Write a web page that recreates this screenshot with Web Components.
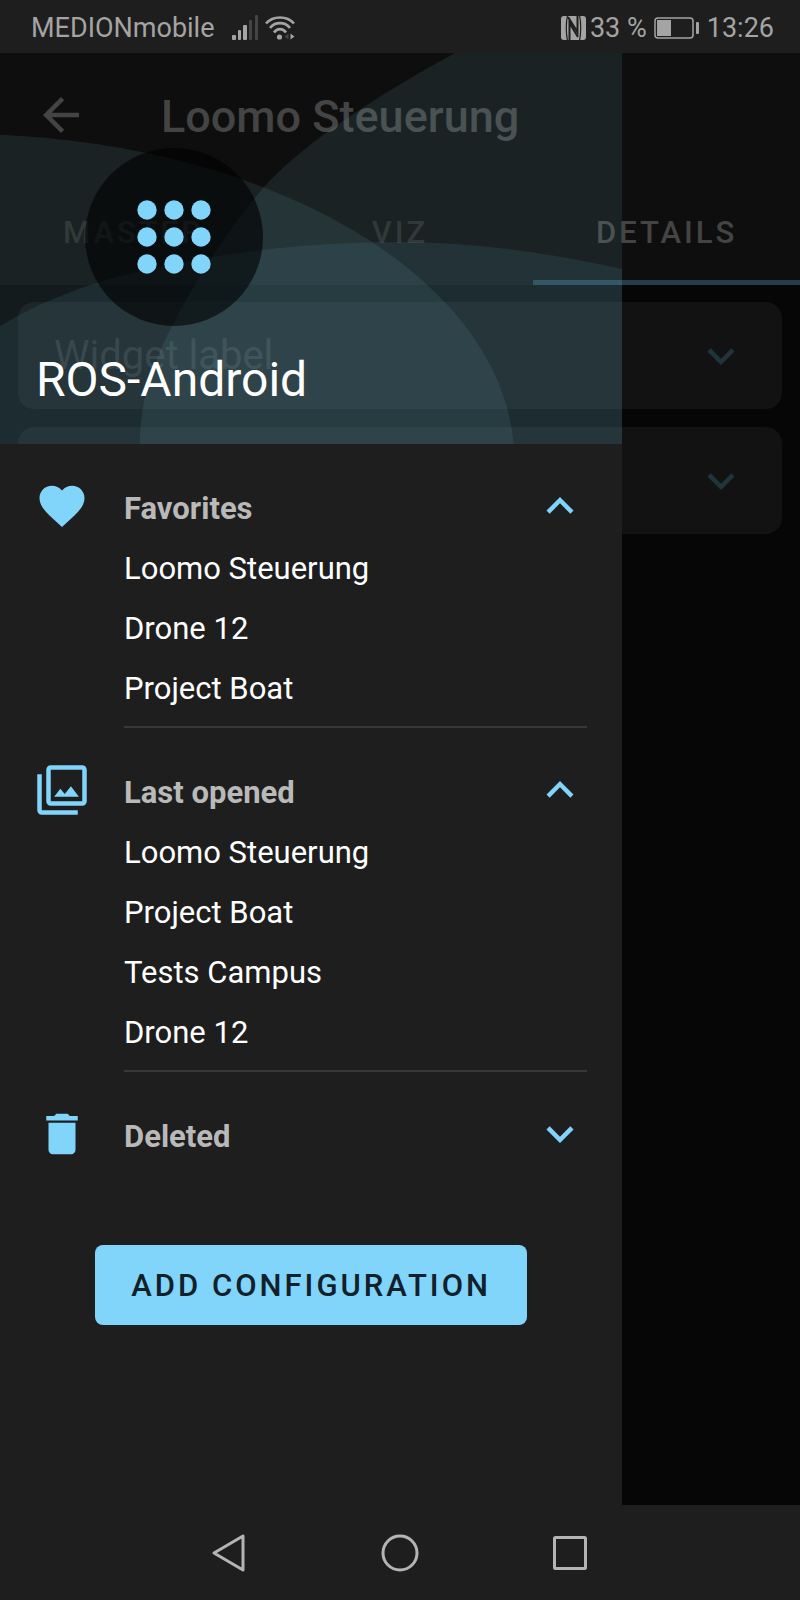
<!DOCTYPE html>
<html lang="en">
<head>
<meta charset="utf-8">
<meta name="viewport" content="width=device-width, initial-scale=1">
<title>ROS-Android</title>
<style>
  html, body { margin: 0; background: #1e1e1e; }
  body { font-family: Roboto, "Liberation Sans", sans-serif; }
</style>
</head>
<body>
<ros-app></ros-app>

<script>
const reset = `
  * { box-sizing: border-box; }
  button { font: inherit; color: inherit; background: none; border: 0; padding: 0; margin: 0; cursor: pointer; }
  svg { display: block; }
`;

function define(name, html, setup) {
  const template = document.createElement('template');
  template.innerHTML = html;
  customElements.define(name, class extends HTMLElement {
    constructor() {
      super();
      this.attachShadow({ mode: 'open' }).append(template.content.cloneNode(true));
    }
    connectedCallback() { if (setup) setup(this, this.shadowRoot); }
  });
}

const icons = {
  heart: 'M12 21.35l-1.45-1.32C5.4 15.36 2 12.28 2 8.5 2 5.42 4.42 3 7.5 3c1.74 0 3.41.81 4.5 2.09C13.09 3.81 14.76 3 16.5 3 19.58 3 22 5.42 22 8.5c0 3.78-3.4 6.86-8.55 11.54L12 21.35z',
  library: 'M15.96 10.29l-2.75 3.54-1.96-2.36L8.5 15h11l-3.54-4.71zM3 5H1v16c0 1.1.9 2 2 2h16v-2H3V5zm18-4H7c-1.1 0-2 .9-2 2v14c0 1.1.9 2 2 2h14c1.1 0 2-.9 2-2V3c0-1.1-.9-2-2-2zm0 16H7V3h14v14z',
  trash: 'M6 19c0 1.1.9 2 2 2h8c1.1 0 2-.9 2-2V7H6v12zM19 4h-3.5l-1-1h-5l-1 1H5v2h14V4z',
  up: 'M12 8l-6 6 1.41 1.41L12 10.83l4.59 4.58L18 14z',
  down: 'M16.59 8.59L12 13.17 7.41 8.59 6 10l6 6 6-6z',
  back: 'M20 11H7.83l5.59-5.59L12 4l-8 8 8 8 1.41-1.41L7.83 13H20v-2z'
};

define('ui-icon', `
  <style>${reset}
    :host { display: block; width: 54px; height: 54px; flex: none; }
    svg { width: 100%; height: 100%; fill: currentColor; }
  </style>
  <svg viewBox="0 0 24 24" aria-hidden="true"><path/></svg>`,
  (host, root) => root.querySelector('path').setAttribute('d', icons[host.getAttribute('name')]));

define('status-bar', `
  <style>${reset}
    :host { display: flex; align-items: center; height: 53px; padding: 2px 26px 0 31px; background: #1e1e1e; color: #a4a4a4; font-size: 27px; line-height: 30px; }
    .signal { margin-left: 16px; }
    .wifi { margin-left: 6px; }
    .nfc { margin-left: auto; }
    .level { margin-left: 4px; }
    .battery { margin: 0 7px; }
  </style>
  <span>MEDIONmobile</span>
  <svg class="signal" width="28" height="26" viewBox="0 0 28 26" fill="currentColor" aria-hidden="true">
    <rect x="1" y="20" width="4" height="5" rx="1"/><rect x="7" y="15" width="3" height="10" rx="1"/>
    <rect x="12" y="10" width="4" height="15" rx="1"/>
    <g fill="#444"><rect x="18" y="5" width="3" height="20" rx="1"/><rect x="24" y="0" width="3" height="25" rx="1"/></g>
  </svg>
  <svg class="wifi" width="30" height="26" viewBox="0 0 30 26" fill="none" stroke="currentColor" stroke-width="2.6" aria-hidden="true">
    <path d="M1 8.500C8 .5 22 .5 29 8.500M5 13C10 6.500 20 6.500 25 13M9 17.500C12 13 18 13 21 17.500"/>
    <circle cx="14.500" cy="22" r="2.600" fill="currentColor" stroke="none"/>
    <path d="M25.500 18.500v6l4-3z" fill="currentColor" stroke="none"/><path d="M23.500 18.500v6l-4-3z" fill="#444" stroke="none"/>
  </svg>
  <svg class="nfc" width="25" height="26" viewBox="0 0 25 26" aria-hidden="true">
    <rect y="1" width="25" height="24" rx="3" fill="currentColor"/>
    <path d="M6.500 0C5 8 5 18 6.500 26M18.500 0C20 8 20 18 18.500 26" fill="none" stroke="#1e1e1e" stroke-width="1.200"/>
    <path d="M8.500 25V8L17 22M16.500 1V17L7 2" fill="none" stroke="#1e1e1e" stroke-width="2"/>
  </svg>
  <span class="level">33 %</span>
  <svg class="battery" width="46" height="22" viewBox="0 0 46 22" aria-hidden="true">
    <rect x="1" y="1" width="38" height="20" rx="3" fill="none" stroke="currentColor" stroke-width="1.500"/>
    <rect x="3" y="3" width="14" height="16" fill="currentColor"/><rect x="42" y="5" width="3" height="12" rx="1" fill="currentColor"/>
  </svg>
  <time>13:26</time>`);

define('app-bar', `
  <style>${reset}
    :host { display: block; background: #0e0e0e; color: #444; }
    header { display: flex; align-items: flex-start; gap: 73px; height: 125px; padding: 35px 34px 0; }
    h1 { margin: 0; font-size: 45px; font-weight: 500; line-height: 58px; }
    nav { display: grid; grid-template-columns: repeat(3, 1fr); height: 107px; }
    nav button { padding-top: 6px; border-bottom: 5px solid transparent; font-size: 31px; font-weight: 500; letter-spacing: 3px; color: #282828; }
    nav button[aria-selected=true] { color: #444; border-color: #263c48; }
  </style>
  <header>
    <button aria-label="Back"><ui-icon name="back"></ui-icon></button>
    <h1><slot></slot></h1>
  </header>
  <nav role="tablist">
    <button role="tab" aria-selected="false">MASTER</button>
    <button role="tab" aria-selected="false">VIZ</button>
    <button role="tab" aria-selected="true">DETAILS</button>
  </nav>`);

define('widget-card', `
  <style>${reset}
    :host { display: flex; align-items: center; justify-content: space-between; height: 107px; padding: 0 34px 0 36px;
      border-radius: 16px; background: #121212; color: #2a2a2a; font-size: 40px; line-height: 44px; }
    ui-icon { color: #21343e; }
  </style>
  <span><slot></slot></span>
  <ui-icon name="down"></ui-icon>`);

define('drawer-header', `
  <style>${reset}
    :host { display: grid; height: 391px; }
    .waves, .content { grid-area: 1 / 1; min-width: 0; }
    .waves { width: 100%; height: 391px; fill: #7fc4d2; fill-opacity: .11; }
    .waves .front { fill: #70b8dc; }
    .content { display: flex; flex-direction: column; justify-content: space-between; padding: 95px 36px 36px; }
    .logo { width: 178px; margin-left: 49px; }
    h2 { margin: 0; color: #fff; font-size: 48px; font-weight: 400; line-height: 56px; }
  </style>
  <svg class="waves" viewBox="0 53 622 391" preserveAspectRatio="none" aria-hidden="true">
    <ellipse cx="-40" cy="460" rx="554" ry="326"/>
    <path d="M140 444C140 405 150 368 172 326C192 287 225 232 263 188C303 142 390 88 455 53H622V444z"/>
    <path class="front" d="M0 326C45 299 90 283 133 273C220 252 310 242 400 242C475 242 550 253 622 269V444H0z"/>
  </svg>
  <div class="content">
    <svg class="logo" viewBox="0 0 178 178" aria-hidden="true">
      <circle cx="89" cy="89" r="89" fill="#000" fill-opacity=".6"/>
      <g fill="#81d4fa">
        <circle cx="62" cy="62" r="9.700"/><circle cx="89" cy="62" r="9.700"/><circle cx="116" cy="62" r="9.700"/>
        <circle cx="62" cy="89" r="9.700"/><circle cx="89" cy="89" r="9.700"/><circle cx="116" cy="89" r="9.700"/>
        <circle cx="62" cy="116" r="9.700"/><circle cx="89" cy="116" r="9.700"/><circle cx="116" cy="116" r="9.700"/>
      </g>
    </svg>
    <h2><slot></slot></h2>
  </div>`);

define('drawer-section', `
  <style>${reset}
    :host { display: block; font-size: 31px; line-height: 60px; color: #fff; }
    button { display: grid; grid-template-columns: 54px 1fr 54px; align-items: start; column-gap: 35px; width: 100%; height: 60px;
      text-align: left; font-weight: 700; color: #81d4fa; }
    .title { color: #b9b9b9; }
    .items { margin-left: 89px; padding-bottom: 7px; border-bottom: 2px solid #383838; margin-bottom: 35px; }
    :host(:not([open])) .items { display: none; }
  </style>
  <button><ui-icon class="icon"></ui-icon><span class="title"></span><ui-icon class="arrow"></ui-icon></button>
  <div class="items"><slot></slot></div>`,
  (host, root) => {
    const open = host.hasAttribute('open');
    root.querySelector('.title').textContent = host.getAttribute('label');
    root.querySelector('button').setAttribute('aria-expanded', open);
    const set = (selector, name) => {
      const icon = document.createElement('ui-icon');
      icon.setAttribute('name', name);
      root.querySelector(selector).replaceWith(icon);
    };
    set('.icon', host.getAttribute('icon'));
    set('.arrow', open ? 'up' : 'down');
  });

define('drawer-link', `
  <style>${reset}
    :host { display: block; }
    a { display: block; color: inherit; text-decoration: none; }
  </style>
  <a href="#"><slot></slot></a>`);

define('nav-drawer', `
  <style>${reset}
    :host { display: flex; flex-direction: column; }
    .body { flex: 1; padding: 35px; background: #1e1e1e; }
    .add { display: block; height: 80px; margin: 78px auto 0; padding: 0 36px; border-radius: 8px; background: #81d4fa;
      color: #12202a; font-size: 31px; font-weight: 500; letter-spacing: 3px; white-space: nowrap; }
  </style>
  <drawer-header>ROS-Android</drawer-header>
  <div class="body">
    <drawer-section label="Favorites" icon="heart" open>
      <drawer-link>Loomo Steuerung</drawer-link>
      <drawer-link>Drone 12</drawer-link>
      <drawer-link>Project Boat</drawer-link>
    </drawer-section>
    <drawer-section label="Last opened" icon="library" open>
      <drawer-link>Loomo Steuerung</drawer-link>
      <drawer-link>Project Boat</drawer-link>
      <drawer-link>Tests Campus</drawer-link>
      <drawer-link>Drone 12</drawer-link>
    </drawer-section>
    <drawer-section label="Deleted" icon="trash"></drawer-section>
    <button class="add">ADD CONFIGURATION</button>
  </div>`);

define('system-nav', `
  <style>${reset}
    :host { display: flex; justify-content: center; height: 95px; background: #1e1e1e; color: #b4b4b4; }
    button { display: grid; place-items: center; width: 170px; }
    svg { fill: none; stroke: currentColor; stroke-width: 3; stroke-linejoin: round; }
  </style>
  <button aria-label="Back"><svg width="40" height="40" viewBox="0 0 40 40"><path d="M4 20L33 3V37z"/></svg></button>
  <button aria-label="Home"><svg width="40" height="40" viewBox="0 0 40 40"><circle cx="20" cy="20" r="17"/></svg></button>
  <button aria-label="Recents"><svg width="40" height="40" viewBox="0 0 40 40"><rect x="4.500" y="4.500" width="31" height="31" rx="1"/></svg></button>`);

define('ros-app', `
  <style>${reset}
    :host { display: flex; flex-direction: column; min-height: 100vh; }
    .stage { flex: 1; display: grid; grid-template-columns: 7fr 2fr; background: #060606; }
    .page { grid-area: 1 / 1 / 2 / 3; }
    nav-drawer { grid-area: 1 / 1; }
    .cards { display: grid; gap: 18px; padding: 17px 18px; }
  </style>
  <status-bar></status-bar>
  <div class="stage">
    <main class="page">
      <app-bar>Loomo Steuerung</app-bar>
      <div class="cards">
        <widget-card>Widget label</widget-card>
        <widget-card></widget-card>
      </div>
    </main>
    <nav-drawer></nav-drawer>
  </div>
  <system-nav></system-nav>`);
</script>
</body>
</html>
